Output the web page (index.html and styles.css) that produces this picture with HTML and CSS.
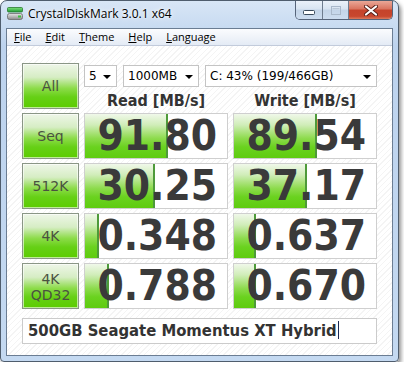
FILE: index.html
```html
<!DOCTYPE html>
<html lang="en">
<head>
    <meta charset="UTF-8">
    <title>CrystalDiskMark 3.0.1 x64</title>
    <link rel="stylesheet" href="styles.css">
</head>
<body>

<div class="window">
    <!-- Title bar -->
    <div class="titlebar">
        <svg class="app-icon" width="16" height="13" viewBox="0 0 16 13">
            <defs>
                <linearGradient id="g1" x1="0" y1="0" x2="0" y2="1">
                    <stop offset="0" stop-color="#7fe07a"/>
                    <stop offset="1" stop-color="#1f9a34"/>
                </linearGradient>
                <linearGradient id="g2" x1="0" y1="0" x2="0" y2="1">
                    <stop offset="0" stop-color="#e6e6e6"/>
                    <stop offset="1" stop-color="#8c8c8c"/>
                </linearGradient>
            </defs>
            <rect x="0.5" y="0.5" width="15" height="4.5" rx="1" fill="url(#g1)" stroke="#2a7a30" stroke-width="0.8"/>
            <rect x="0.5" y="6.5" width="15" height="6" rx="2" fill="url(#g2)" stroke="#6a6a6a" stroke-width="0.8"/>
            <rect x="11" y="8.5" width="3" height="2" fill="#3cc040"/>
        </svg>
        <span class="title">CrystalDiskMark 3.0.1 x64</span>
        <div class="caption-buttons">
            <span class="cb cb-min">
                <svg width="12" height="5" viewBox="0 0 12 5"><rect x="0.5" y="0.5" width="11" height="4" rx="1" fill="#fff" stroke="#3a4a5c"/></svg>
            </span>
            <span class="cb cb-max">
                <svg width="10" height="9" viewBox="0 0 10 9"><rect x="0.5" y="0.5" width="9" height="8" fill="none" stroke="#a9b8ca"/><rect x="1.5" y="2" width="7" height="1.2" fill="#b8c6d6"/></svg>
            </span>
            <span class="cb cb-close">
                <svg width="14" height="11" viewBox="0 0 14 11"><path d="M2 1.5 L12 9.5 M12 1.5 L2 9.5" stroke="#5a2018" stroke-width="4" stroke-linecap="round"/><path d="M2 1.5 L12 9.5 M12 1.5 L2 9.5" stroke="#fff" stroke-width="2.2" stroke-linecap="round"/></svg>
            </span>
        </div>
    </div>

    <div class="client">
        <ul class="menubar">
            <li><u>F</u>ile</li>
            <li><u>E</u>dit</li>
            <li><u>T</u>heme</li>
            <li><u>H</u>elp</li>
            <li><u>L</u>anguage</li>
        </ul>

        <div class="main">
            <div class="grid">
                <div class="run">All</div>
                <div class="top">
                    <div class="selects">
                        <div class="combo combo-count">5</div>
                        <div class="combo combo-size">1000MB</div>
                        <div class="combo combo-drive">C: 43% (199/466GB)</div>
                    </div>
                    <div class="heads">
                        <span>Read [MB/s]</span>
                        <span>Write [MB/s]</span>
                    </div>
                </div>

                <div class="run">Seq</div>
                <div class="cell"><div class="bar" style="width:83px"></div><span class="val">91.80</span></div>
                <div class="cell"><div class="bar" style="width:83px"></div><span class="val">89.54</span></div>

                <div class="run">512K</div>
                <div class="cell"><div class="bar" style="width:70px"></div><span class="val">30.25</span></div>
                <div class="cell"><div class="bar" style="width:73px"></div><span class="val">37.17</span></div>

                <div class="run">4K</div>
                <div class="cell"><div class="bar" style="width:14px"></div><span class="val">0.348</span></div>
                <div class="cell"><div class="bar" style="width:22px"></div><span class="val">0.637</span></div>

                <div class="run run-two">4K<br>QD32</div>
                <div class="cell"><div class="bar" style="width:24px"></div><span class="val">0.788</span></div>
                <div class="cell"><div class="bar" style="width:22px"></div><span class="val">0.670</span></div>
            </div>

            <div class="comment">500GB Seagate Momentus XT Hybrid<span class="caret"></span></div>
        </div>
    </div>
</div>

</body>
</html>
```

FILE: styles.css
```css
body {
    margin: 0;
    background-color: #fff;
    font-family: "Open Sans", sans-serif;
}

/* Window frame (Aero style) */
.window {
    width: 399px;
    box-sizing: border-box;
    border: 1px solid #4f5d6d;
    border-radius: 7px 7px 4px 4px;
    background: linear-gradient(#d8e6f6, #bdd3ee 45px, #c4d9f1);
    box-shadow: 2px 3px 4px rgba(0, 0, 0, 0.45);
}

.titlebar {
    height: 27px;
    display: flex;
    align-items: flex-start;
}

.app-icon {
    margin: 6px 0 0 6px;
}

.title {
    margin: 5px 0 0 5px;
    font-size: 12px;
    line-height: 16px;
    color: #000;
    text-shadow: 0 0 6px #fff, 0 0 3px #fff;
}

.caption-buttons {
    margin-left: auto;
    margin-right: 5px;
    display: flex;
    height: 18px;
    border: 1px solid #56647a;
    border-top: 0;
    border-radius: 0 0 5px 5px;
    overflow: hidden;
}

.cb {
    display: flex;
    align-items: center;
    justify-content: center;
    height: 18px;
}

.cb-min {
    width: 27px;
    padding-top: 5px;
    box-sizing: border-box;
    border-right: 1px solid #6e7c8e;
    background: linear-gradient(#eaf1f9, #d8e4f1 45%, #c3d4e8 50%, #ccdcef);
}

.cb-max {
    width: 25px;
    border-right: 1px solid #6e7c8e;
    background: linear-gradient(#eaf1f9, #d8e4f1 45%, #c3d4e8 50%, #ccdcef);
}

.cb-close {
    width: 43px;
    background: linear-gradient(#eaa797, #d9735e 45%, #c5432b 50%, #c8472e 85%, #dc7a5d);
}

/* Client area */
.client {
    margin: 0 5px 5px;
    border: 1px solid #6b7d93;
    background-color: #fff;
}

.menubar {
    list-style-type: none;
    margin: 0;
    padding: 0;
    height: 16px;
    display: flex;
    border-bottom: 1px solid #c2cbdb;
    background: linear-gradient(#fbfcfe, #e4ebf5);
}

.menubar li {
    padding: 0 7px;
    font-size: 11px;
    line-height: 16px;
    color: #000;
}

.main {
    padding: 17px 15px 11px;
    background: repeating-linear-gradient(135deg, #fff 0, #fff 3px, #f4f4f4 3px, #f4f4f4 4px);
}

.grid {
    display: grid;
    grid-template-columns: 57px 144px 144px;
    grid-auto-rows: 46px;
    column-gap: 5px;
    row-gap: 4px;
}

/* Green run buttons */
.run {
    box-sizing: border-box;
    border: 1px solid #8a9686;
    box-shadow: inset 0 0 0 1px rgba(255, 255, 255, 0.6);
    background: linear-gradient(#eef6e8, #d6edc4 30%, #8ddc4a 55%, #66d016 75%, #5ccc00);
    display: flex;
    align-items: center;
    justify-content: center;
    text-align: center;
    font-family: "DejaVu Sans", sans-serif;
    font-size: 14px;
    line-height: 16px;
    color: #4a5240;
}

.run-two {
    padding-top: 1px;
}

.top {
    grid-column: span 2;
    display: flex;
    flex-direction: column;
}

.selects {
    display: flex;
    gap: 6px;
    margin-top: 2px;
}

.combo {
    box-sizing: border-box;
    height: 22px;
    border: 1px solid #c4c4c4;
    background-color: #fff;
    padding: 0 16px 0 4px;
    font-family: "DejaVu Sans", sans-serif;
    font-size: 12px;
    line-height: 20px;
    color: #000;
    position: relative;
}

.combo::after {
    content: "";
    position: absolute;
    right: 5px;
    top: 9px;
    border-left: 4px solid transparent;
    border-right: 4px solid transparent;
    border-top: 4px solid #000;
}

.combo-count {
    width: 33px;
}

.combo-size {
    width: 76px;
}

.combo-drive {
    width: 172px;
}

.heads {
    display: grid;
    grid-template-columns: 144px 144px;
    column-gap: 5px;
    margin-top: 4px;
    text-align: center;
    font-family: "DejaVu Sans Condensed", "DejaVu Sans", sans-serif;
    font-weight: bold;
    font-size: 16px;
    line-height: 19px;
    color: #333;
}

/* Result meters */
.cell {
    position: relative;
    box-sizing: border-box;
    border: 1px solid #cfcfcf;
    background-color: #fff;
    text-align: right;
    padding-right: 10px;
}

.bar {
    position: absolute;
    left: 0;
    top: 0;
    bottom: 0;
    box-sizing: border-box;
    border-right: 2px solid #4e9a3a;
    background: linear-gradient(#f0f8ea, #d0edb8 25%, #8edb4e 55%, #6ad21f 75%, #5fcc10);
}

.val {
    position: relative;
    display: block;
    font-family: "DejaVu Sans Condensed", "DejaVu Sans", sans-serif;
    font-weight: bold;
    font-size: 42px;
    line-height: 44px;
    color: #3a3a3a;
}

.comment {
    margin-top: 9px;
    height: 26px;
    box-sizing: border-box;
    border: 1px solid #cbcbcb;
    background-color: #fff;
    padding-left: 5px;
    font-family: "DejaVu Sans Condensed", "DejaVu Sans", sans-serif;
    font-weight: bold;
    font-size: 16.5px;
    line-height: 24px;
    color: #333;
}

.caret {
    display: inline-block;
    width: 1px;
    height: 18px;
    margin-left: 1px;
    vertical-align: -3px;
    background-color: #1b2a55;
}
```
